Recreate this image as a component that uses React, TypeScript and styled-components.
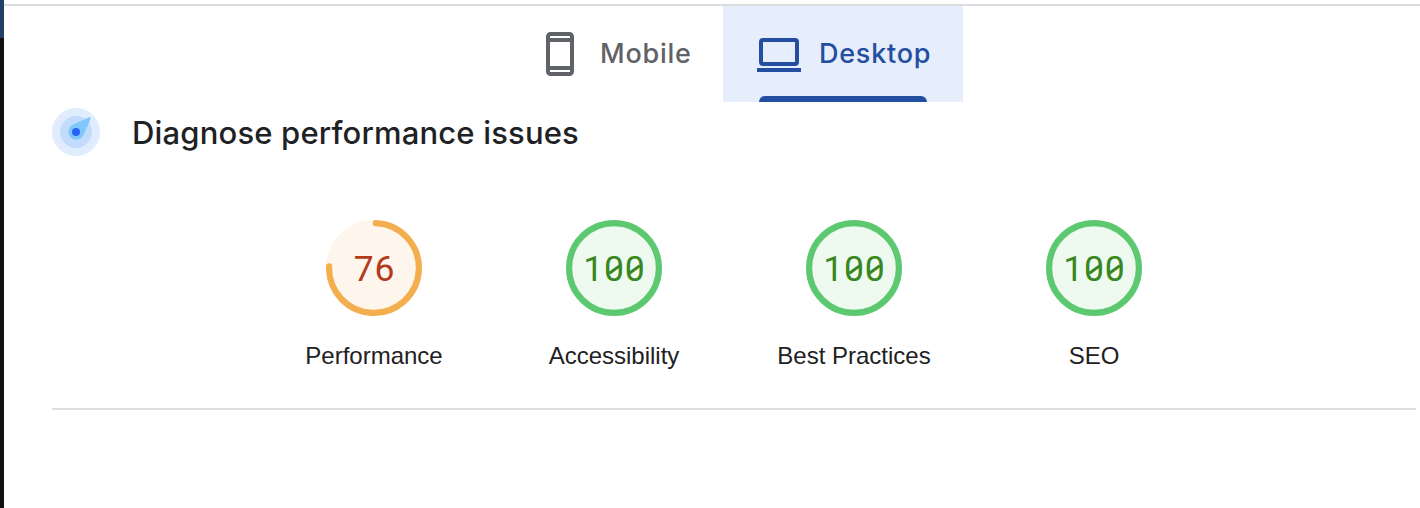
import React from "react";
import styled, { createGlobalStyle } from "styled-components";

const Global = createGlobalStyle`
  * { box-sizing: border-box; }
  body { margin: 0; background: #fff; }
`;

const Screen = styled.div`
  display: flex;
  width: 1420px;
  height: 508px;
  overflow: hidden;
  background: #fff;
`;

const Edge = styled.div`
  width: 4px;
  flex: none;
  background: linear-gradient(#243f69 0 38px, #12110f 38px);
`;

const Page = styled.main`
  flex: 1;
  display: flex;
  flex-direction: column;
  padding-top: 4px;
`;

const Tabs = styled.nav`
  display: flex;
  height: 98px;
  padding-left: 479px;
  border-top: 2px solid #dadce0;
`;

const Tab = styled.div<{ $active?: boolean }>`
  display: flex;
  flex-direction: column;
  width: 240px;
  height: 96px;
  background: ${(p) => (p.$active ? "#e6edfb" : "transparent")};
  color: ${(p) => (p.$active ? "#234ea1" : "#5f6368")};
`;

const TabContent = styled.div<{ $inset: number; $gap: number }>`
  display: flex;
  align-items: center;
  flex: 1;
  gap: ${(p) => p.$gap}px;
  padding-left: ${(p) => p.$inset}px;
  padding-top: 6px;
  svg { display: block; flex: none; }
`;

const TabLabel = styled.span`
  font: 500 27px/36px Inter, sans-serif;
  letter-spacing: 0.75px;
`;

const Indicator = styled.div<{ $active?: boolean }>`
  width: 168px;
  height: 6px;
  margin: 0 36px;
  border-radius: 6px 6px 0 0;
  background: ${(p) => (p.$active ? "#234ea1" : "transparent")};
`;

const Heading = styled.header`
  display: flex;
  align-items: center;
  gap: 32px;
  height: 60px;
  padding-left: 48px;
  svg { display: block; }
`;

const Title = styled.h1`
  margin: 0;
  padding-top: 2px;
  font: 500 31px/40px Inter, sans-serif;
  letter-spacing: 0.17px;
  color: #202124;
`;

const Scores = styled.section`
  display: flex;
  height: 248px;
  margin: 0 4px 0 48px;
  padding: 58px 0 0 202px;
  border-bottom: 2px solid #dedede;
`;

const Score = styled.div`
  display: flex;
  flex-direction: column;
  align-items: center;
  width: 240px;
  gap: 26px;
`;

const Dial = styled.div<{ $color: string }>`
  display: grid;
  width: 96px;
  height: 96px;
  place-items: center;
  color: ${(p) => p.$color};
  > * { grid-area: 1 / 1; }
`;

const Value = styled.div`
  display: flex;
  font: 400 35.5px/42px Roboto, sans-serif;
  padding-top: 2px;
`;

const Digit = styled.span<{ $slashed: boolean }>`
  position: relative;
  width: 20.8px;
  text-align: center;
  &::after {
    content: "";
    display: ${(p) => (p.$slashed ? "block" : "none")};
    position: absolute;
    left: 4px;
    top: 20px;
    width: 13px;
    height: 2.5px;
    background: currentColor;
    transform: rotate(-36deg);
  }
`;

const ScoreLabel = styled.div`
  font: 400 24px/28px "Liberation Sans", Arial, sans-serif;
  color: #212121;
`;

const MobileIcon = () => (
  <svg width="28" height="44" viewBox="0 0 28 44" fill="none" stroke="currentColor" strokeWidth="4">
    <rect x="2" y="2" width="24" height="40" rx="2.5" />
    <path d="M2 8h24M2 36h24" />
  </svg>
);

const DesktopIcon = () => (
  <svg width="44" height="36" viewBox="0 -2 44 36" fill="none" stroke="currentColor" strokeWidth="4">
    <rect x="4" y="2" width="36" height="24" rx="2" />
    <path d="M0 32h44" />
  </svg>
);

const CompassIcon = () => (
  <svg width="48" height="48" viewBox="0 0 48 48">
    <circle cx="24" cy="24" r="24" fill="#e1edfe" />
    <circle cx="24" cy="24" r="16" fill="#c3dcfb" />
    <path d="M20 16.9 37 9.3Q39.2 9 38.5 11.2L31 28A8 8 0 1 1 20 16.9Z" fill="#7fc8fa" />
    <circle cx="24" cy="24" r="4" fill="#2962f6" />
  </svg>
);

const Ring = ({ full }: { full: boolean }) => (
  <svg width="96" height="96" viewBox="0 0 96 96">
    <circle cx="48" cy="48" r="48" fill={full ? "#eef9f0" : "#fef6ed"} />
    {full ? (
      <circle cx="48" cy="48" r="44.9" fill="none" stroke="#5cc970" strokeWidth="6.2" />
    ) : (
      <path d="M49.8 3.1A44.9 44.9 0 1 1 3.1 46.4" fill="none" stroke="#f3ae4e" strokeWidth="6.2" strokeLinecap="round" />
    )}
  </svg>
);

const scores = [
  { label: "Performance", value: 76 },
  { label: "Accessibility", value: 100 },
  { label: "Best Practices", value: 100 },
  { label: "SEO", value: 100 },
];

export default function App() {
  return (
    <Screen>
      <Global />
      <Edge />
      <Page>
        <Tabs>
          <Tab>
            <TabContent $inset={63} $gap={26}>
              <MobileIcon />
              <TabLabel>Mobile</TabLabel>
            </TabContent>
            <Indicator />
          </Tab>
          <Tab $active>
            <TabContent $inset={34} $gap={18}>
              <DesktopIcon />
              <TabLabel>Desktop</TabLabel>
            </TabContent>
            <Indicator $active />
          </Tab>
        </Tabs>
        <Heading>
          <CompassIcon />
          <Title>Diagnose performance issues</Title>
        </Heading>
        <Scores>
          {scores.map(({ label, value }) => (
            <Score key={label}>
              <Dial $color={value === 100 ? "#38861f" : "#b33a1b"}>
                <Ring full={value === 100} />
                <Value>
                  {String(value).split("").map((digit, i) => (
                    <Digit key={i} $slashed={digit === "0"}>{digit}</Digit>
                  ))}
                </Value>
              </Dial>
              <ScoreLabel>{label}</ScoreLabel>
            </Score>
          ))}
        </Scores>
      </Page>
    </Screen>
  );
}
